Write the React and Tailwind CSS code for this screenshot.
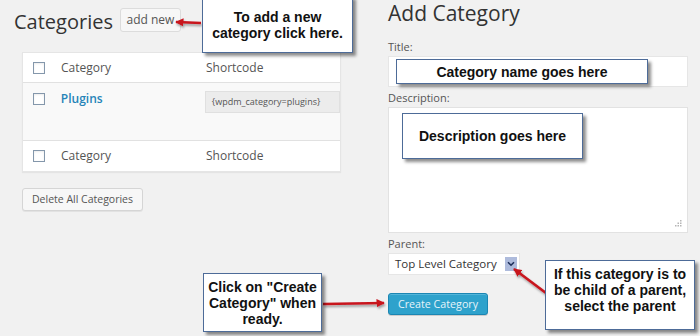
import React from "react";

const ui = { fontFamily: '"Open Sans", "Noto Sans", sans-serif' };
const note = { fontFamily: '"Liberation Sans", Arial, sans-serif' };

const Callout = ({ className, children }) => (
  <div
    style={note}
    className={`absolute bg-white border border-[#4d6b98] shadow-[3px_3px_3px_rgba(0,0,0,0.45)] text-[14px] leading-[16px] font-bold text-[#111] text-center flex flex-col ${className}`}
  >
    {children}
  </div>
);

const Checkbox = () => (
  <span className="inline-block w-[12px] h-[12px] border border-[#8497ab] bg-white shadow-[inset_0_1px_2px_rgba(0,0,0,0.08)]" />
);

const Arrows = () => (
  <svg className="absolute inset-0 pointer-events-none" width="700" height="336">
    <defs>
      <marker id="head" viewBox="0 0 10 10" refX="9" refY="5" markerWidth="3.2" markerHeight="3.2" orient="auto">
        <path d="M0 0 L10 5 L0 10 Z" fill="#c8141e" />
      </marker>
      <filter id="sh" x="-20%" y="-50%" width="140%" height="200%">
        <feDropShadow dx="1" dy="2" stdDeviation="1" floodColor="#000" floodOpacity="0.35" />
      </filter>
    </defs>
    <g stroke="#c8141e" strokeWidth="2.6" fill="none" filter="url(#sh)" markerEnd="url(#head)">
      <line x1="201" y1="23" x2="176" y2="22" />
      <line x1="323" y1="304" x2="384" y2="303" />
      <line x1="546" y1="293" x2="514" y2="269" />
    </g>
  </svg>
);

export default function App() {
  return (
    <div style={ui} className="relative w-[700px] h-[336px] overflow-hidden bg-[#f1f1f1] text-[#555] flex">
      {/* left: category list */}
      <div className="w-[388px] shrink-0 flex flex-col">
        <div className="flex items-start pl-[14px]">
          <h1 className="text-[20px] leading-[28px] mt-[8px] text-[#333] font-normal">Categories</h1>
          <button className="ml-[7px] mt-[8px] h-[24px] w-[61px] rounded-[3px] border border-[#dcdcdc] bg-[#f7f7f7] text-[12px] text-[#555] leading-none">
            add new
          </button>
        </div>

        <div className="ml-[22px] mt-[16px] w-[319px] bg-white border border-[#e5e5e5] shadow-[0_1px_1px_rgba(0,0,0,0.05)] text-[12px]">
          <div className="h-[30px] flex items-center border-b border-[#e1e1e1]">
            <div className="w-[38px] pl-[10px] flex"><Checkbox /></div>
            <div className="w-[145px]">Category</div>
            <div>Shortcode</div>
          </div>
          <div className="h-[58px] flex items-start bg-[#f9f9f9] border-b border-[#e1e1e1]">
            <div className="w-[38px] pl-[10px] pt-[10px] flex"><Checkbox /></div>
            <div className="w-[145px] pt-[7px] font-semibold text-[#2584b8]">Plugins</div>
            <div className="mt-[8px] h-[22px] w-[136px] bg-[#ececec] border border-[#e0e0e0] flex items-center pl-[6px] text-[9px] text-[#555]">
              {"{wpdm_category=plugins}"}
            </div>
          </div>
          <div className="h-[30px] flex items-center">
            <div className="w-[38px] pl-[10px] flex"><Checkbox /></div>
            <div className="w-[145px]">Category</div>
            <div>Shortcode</div>
          </div>
        </div>

        <button className="ml-[22px] mt-[16px] self-start h-[23px] w-[121px] rounded-[3px] border border-[#d5d5d5] bg-[#f7f7f7] shadow-[0_1px_0_rgba(0,0,0,0.06)] text-[10.5px] text-[#555] whitespace-nowrap">
          Delete All Categories
        </button>
      </div>

      {/* right: add form */}
      <div className="w-[300px] flex flex-col">
        <h2 className="text-[21px] leading-[26px] text-[#333] font-normal whitespace-nowrap">Add Category</h2>
        <label className="mt-[13px] text-[11px] leading-[16px]">Title:</label>
        <div className="mt-[1px] h-[31px] bg-white border border-[#e6e6e6]" />
        <label className="mt-[3px] text-[11px] leading-[16px]">Description:</label>
        <div className="relative mt-[1px] h-[126px] bg-white border border-[#e2e2e2]">
          <svg className="absolute right-[5px] bottom-[5px]" width="7" height="7" viewBox="0 0 7 7">
            <g fill="#b5b5b5">
              <rect x="5" y="0" width="1.5" height="1.5" />
              <rect x="2.5" y="2.5" width="1.5" height="1.5" />
              <rect x="5" y="2.5" width="1.5" height="1.5" />
              <rect x="0" y="5" width="1.5" height="1.5" />
              <rect x="2.5" y="5" width="1.5" height="1.5" />
              <rect x="5" y="5" width="1.5" height="1.5" />
            </g>
          </svg>
        </div>
        <label className="mt-[3px] text-[11px] leading-[16px]">Parent:</label>
        <div className="mt-[1px] self-start h-[22px] w-[132px] bg-white border border-[#e6e6e6] flex items-center pl-[6px] pr-[2px] justify-between">
          <span className="text-[11.5px] text-[#333] whitespace-nowrap">Top Level Category</span>
          <span className="w-[12px] h-[14px] bg-[#aebbdc] flex items-center justify-center shrink-0">
            <svg width="8" height="6" viewBox="0 0 8 6">
              <path d="M1 1.2 L4 4.2 L7 1.2" stroke="#1e2f5a" strokeWidth="1.6" fill="none" />
            </svg>
          </span>
        </div>
        <button className="mt-[18px] self-start h-[22px] w-[100px] rounded-[3px] bg-[#2ea2cc] border border-[#1b86b3] shadow-[inset_0_1px_0_rgba(120,200,230,0.5),0_1px_0_rgba(0,0,0,0.15)] text-[10.7px] text-[#e6f4fa] whitespace-nowrap">
          Create Category
        </button>
      </div>

      <Arrows />

      <Callout className="left-[202px] top-[-4px] w-[151px] h-[57px] justify-center">
        <span>To add a new</span>
        <span>category click here.</span>
      </Callout>
      <Callout className="left-[396px] top-[59px] w-[252px] h-[25px] justify-center">
        <span>Category name goes here</span>
      </Callout>
      <Callout className="left-[402px] top-[113px] w-[181px] h-[46px] justify-center">
        <span>Description goes here</span>
      </Callout>
      <Callout className="left-[545px] top-[260px] w-[150px] h-[70px] pt-[5px]">
        <span>If this category is to</span>
        <span>be child of a parent,</span>
        <span>select the parent</span>
      </Callout>
      <Callout className="left-[203px] top-[273px] w-[119px] h-[59px] justify-center">
        <span>Click on "Create</span>
        <span>Category" when</span>
        <span>ready.</span>
      </Callout>
    </div>
  );
}
